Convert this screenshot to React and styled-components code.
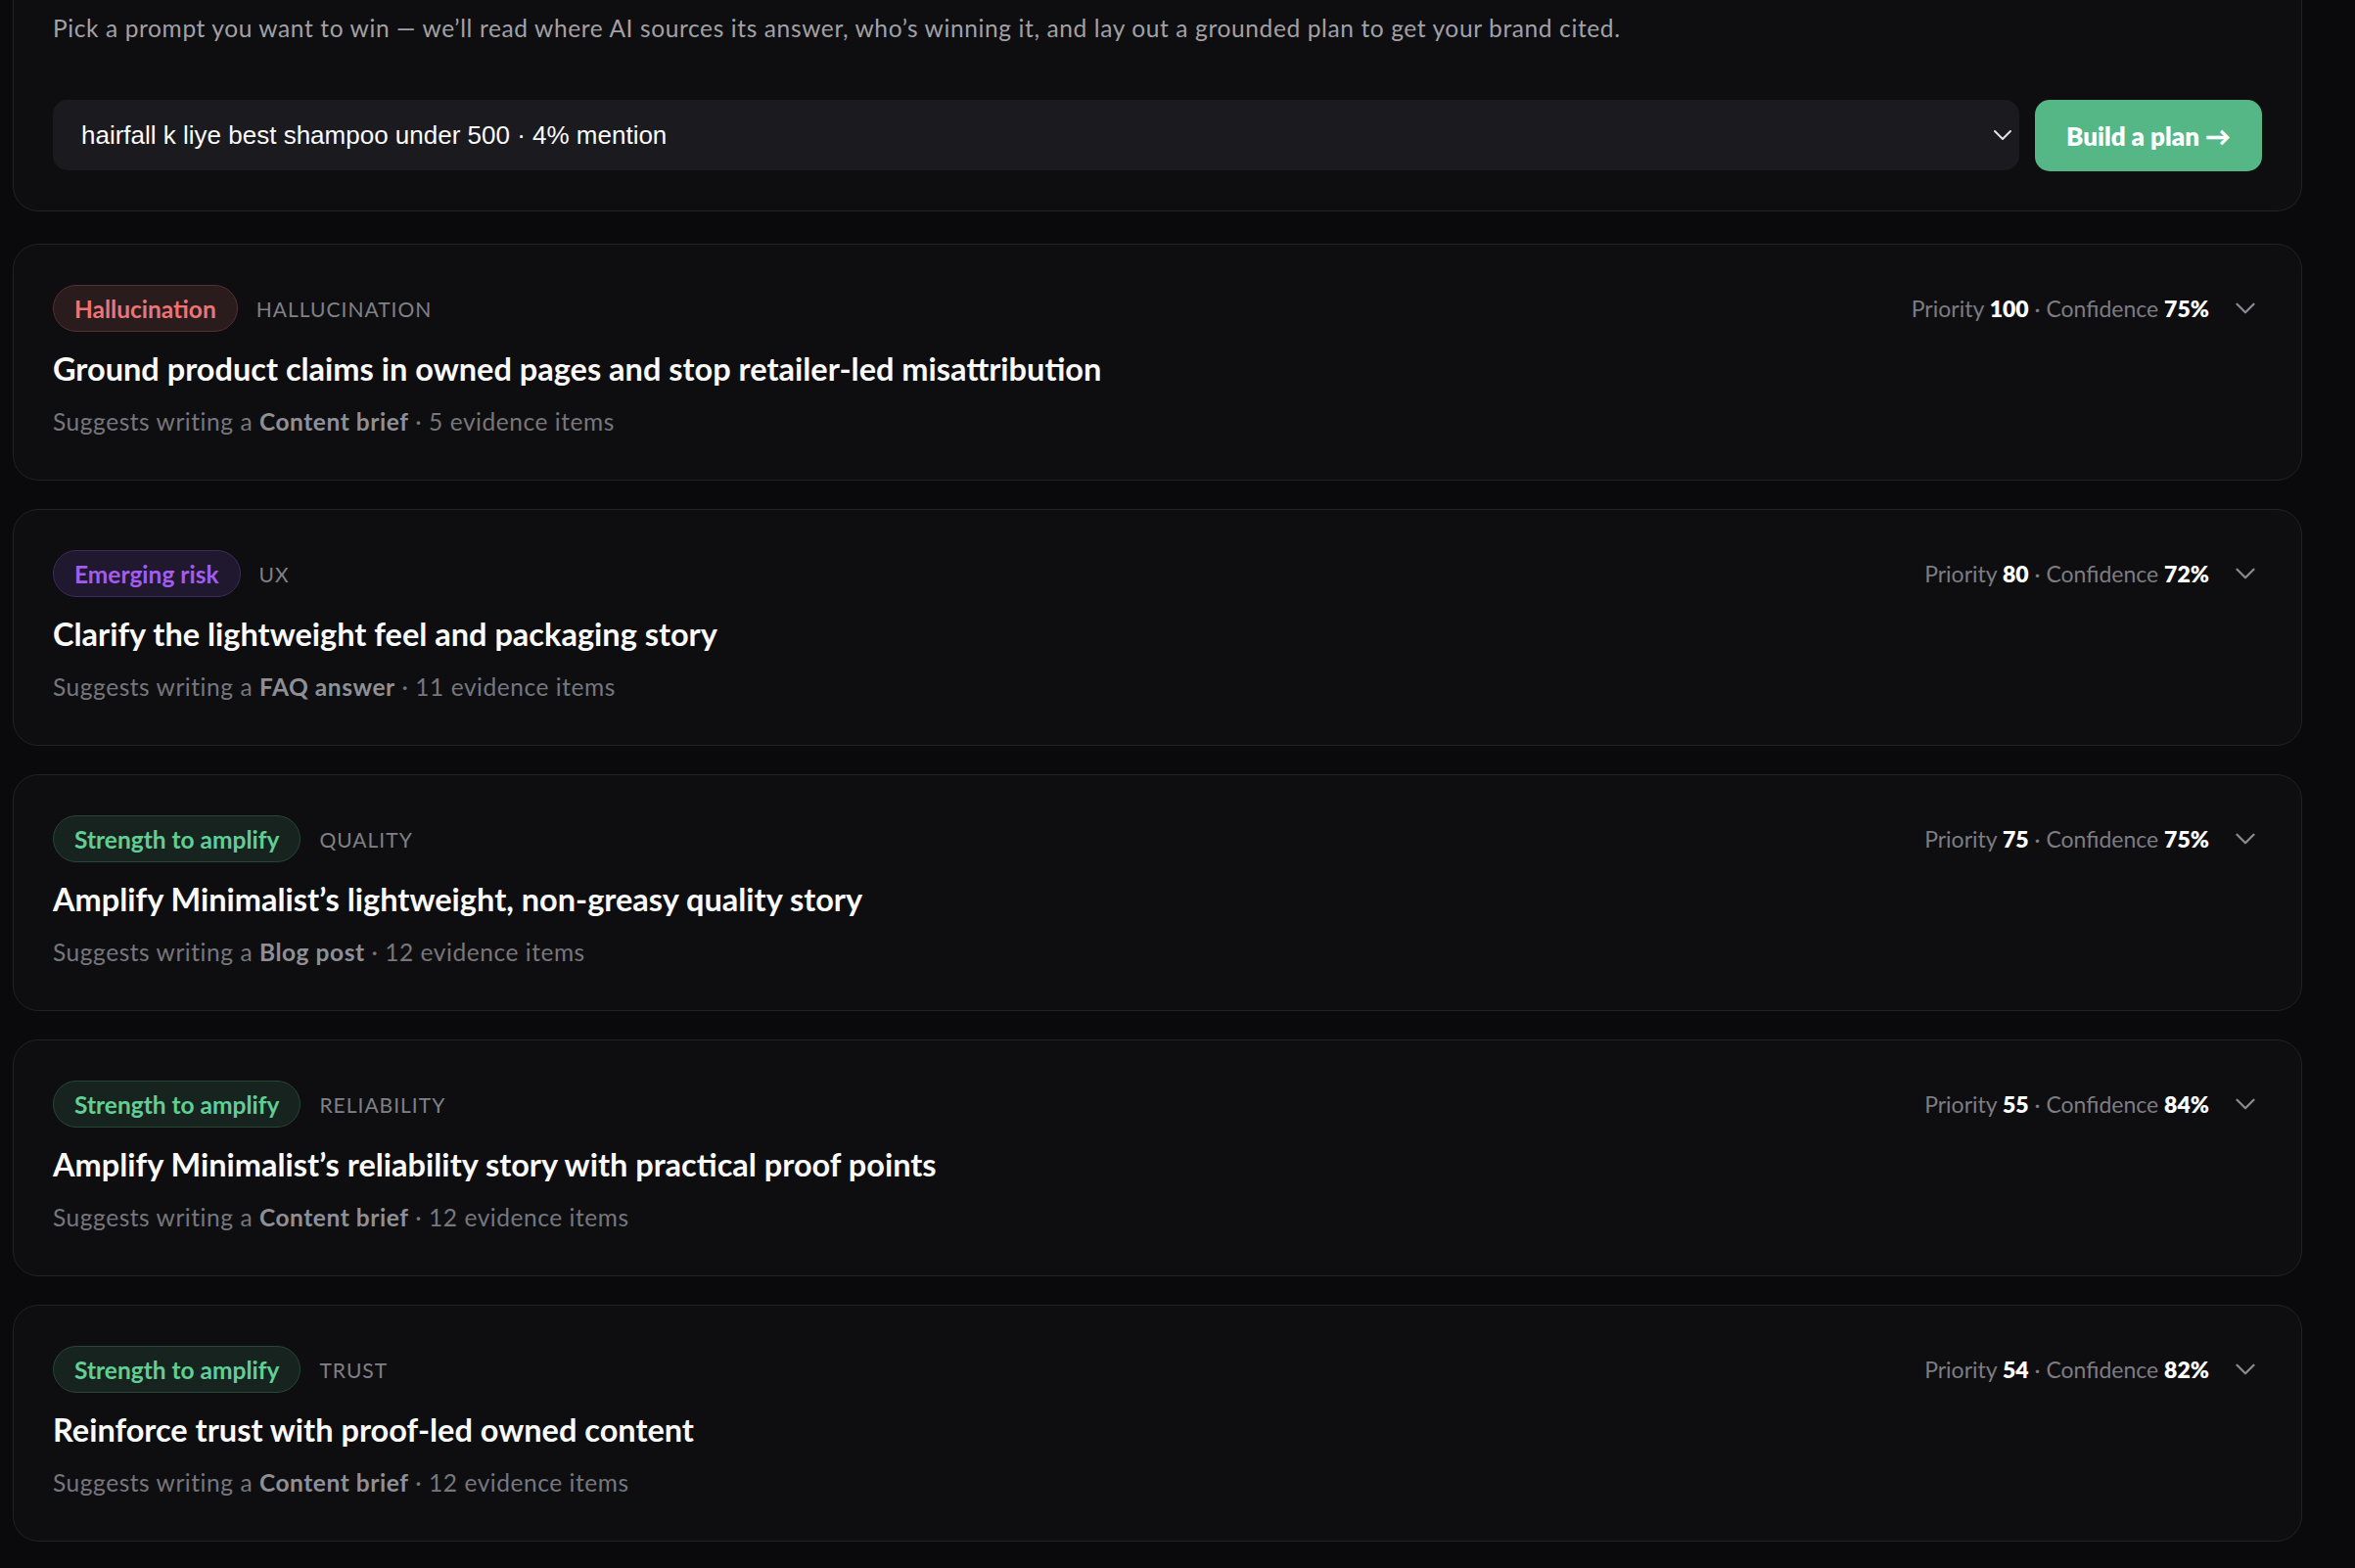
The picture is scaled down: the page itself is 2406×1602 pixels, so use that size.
import React from 'react';
import styled, { createGlobalStyle } from 'styled-components';
import { ChevronDown } from 'lucide-react';

const GlobalStyle = createGlobalStyle`
    html, body {
        margin: 0;
        padding: 0;
        background: #0a0a0c;
    }
    body {
        font-family: Lato, "Noto Sans", sans-serif;
        color: #f4f4f5;
    }
`;

const Page = styled.div`
    padding: 0 54px 40px 13px;
    display: flex;
    flex-direction: column;
    gap: 29px;
`;

const Card = styled.div`
    background: #0e0e10;
    border: 1px solid #222226;
    border-radius: 26px;
    padding: 40px;
`;

const PromptCard = styled(Card)`
    border-top: none;
    border-radius: 0 0 26px 26px;
    padding-top: 12px;
    margin-bottom: 4px;
`;

const Intro = styled.p`
    margin: 0 0 56px;
    font-size: 24.5px;
    letter-spacing: 0.62px;
    line-height: 34px;
    color: #a1a1a7;
`;

const PromptRow = styled.div`
    display: flex;
    gap: 16px;
    align-items: stretch;
`;

const Select = styled.div`
    flex: 1;
    height: 72px;
    background: #1b1b1f;
    border-radius: 15px;
    display: flex;
    align-items: center;
    justify-content: space-between;
    padding: 0 1px 0 29px;
    font-family: "Liberation Sans", Arial, sans-serif;
    font-size: 26px;
    color: #fafafa;
`;

const BuildButton = styled.button`
    width: 232px;
    height: 73px;
    border: none;
    border-radius: 15px;
    background: #55b686;
    color: #fff;
    font-family: Lato, sans-serif;
    font-weight: 800;
    font-size: 26px;
    cursor: pointer;
`;

const Header = styled.div`
    display: flex;
    align-items: center;
    justify-content: space-between;
    height: 50px;
`;

const Tags = styled.div`
    display: flex;
    align-items: center;
    gap: 19px;
`;

const tones = {
    red: { bg: '#2a1b1c', border: '#553032', fg: '#ef7372' },
    purple: { bg: '#20182e', border: '#3d2a5c', fg: '#a35cf0' },
    green: { bg: '#17231f', border: '#284536', fg: '#5fcf95' },
};

const Badge = styled.span`
    display: inline-flex;
    align-items: center;
    height: 48px;
    box-sizing: border-box;
    padding: 0 21px;
    border-radius: 24px;
    font-size: 24.5px;
    font-weight: 700;
    background: ${p => tones[p.$tone].bg};
    border: 1px solid ${p => tones[p.$tone].border};
    color: ${p => tones[p.$tone].fg};
`;

const Category = styled.span`
    font-size: 21px;
    letter-spacing: 1px;
    text-transform: uppercase;
    color: #808087;
`;

const Meta = styled.div`
    display: flex;
    align-items: center;
    gap: 20px;
    font-size: 23px;
    color: #7c7c83;

    b {
        color: #fff;
        font-weight: 800;
    }
`;

const Title = styled.h3`
    margin: 17px 0 0;
    font-size: 32.5px;
    line-height: 40px;
    font-weight: 700;
    color: #fafafa;
`;

const Summary = styled.div`
    margin-top: 18px;
    margin-bottom: 3px;
    font-size: 24.5px;
    letter-spacing: 0.55px;
    line-height: 32px;
    color: #76767d;

    b {
        font-weight: 700;
        color: #8f8f96;
    }
`;

const recommendations = [
    {
        tone: 'red',
        badge: 'Hallucination',
        category: 'Hallucination',
        priority: 100,
        confidence: 75,
        title: 'Ground product claims in owned pages and stop retailer-led misattribution',
        format: 'Content brief',
        evidence: 5,
    },
    {
        tone: 'purple',
        badge: 'Emerging risk',
        category: 'UX',
        priority: 80,
        confidence: 72,
        title: 'Clarify the lightweight feel and packaging story',
        format: 'FAQ answer',
        evidence: 11,
    },
    {
        tone: 'green',
        badge: 'Strength to amplify',
        category: 'Quality',
        priority: 75,
        confidence: 75,
        title: 'Amplify Minimalist\u2019s lightweight, non-greasy quality story',
        format: 'Blog post',
        evidence: 12,
    },
    {
        tone: 'green',
        badge: 'Strength to amplify',
        category: 'Reliability',
        priority: 55,
        confidence: 84,
        title: 'Amplify Minimalist\u2019s reliability story with practical proof points',
        format: 'Content brief',
        evidence: 12,
    },
    {
        tone: 'green',
        badge: 'Strength to amplify',
        category: 'Trust',
        priority: 54,
        confidence: 82,
        title: 'Reinforce trust with proof-led owned content',
        format: 'Content brief',
        evidence: 12,
    },
];

const RecommendationCard = ({ rec }) => (
    <Card>
        <Header>
            <Tags>
                <Badge $tone={rec.tone}>{rec.badge}</Badge>
                <Category>{rec.category}</Category>
            </Tags>
            <Meta>
                <span>
                    Priority <b>{rec.priority}</b> · Confidence <b>{rec.confidence}%</b>
                </span>
                <ChevronDown size={34} strokeWidth={1.6} color="#8a8a90" />
            </Meta>
        </Header>
        <Title>{rec.title}</Title>
        <Summary>
            Suggests writing a <b>{rec.format}</b> · {rec.evidence} evidence items
        </Summary>
    </Card>
);

const App = () => (
    <>
        <GlobalStyle />
        <Page>
            <PromptCard>
                <Intro>
                    Pick a prompt you want to win — we’ll read where AI sources its answer, who’s winning it, and lay out a grounded plan to get your brand cited.
                </Intro>
                <PromptRow>
                    <Select>
                        <span>hairfall k liye best shampoo under 500 · 4% mention</span>
                        <ChevronDown size={32} strokeWidth={1.5} color="#e4e4e7" />
                    </Select>
                    <BuildButton>Build a plan →</BuildButton>
                </PromptRow>
            </PromptCard>
            {recommendations.map((rec, i) => (
                <RecommendationCard key={i} rec={rec} />
            ))}
        </Page>
    </>
);

export default App;
